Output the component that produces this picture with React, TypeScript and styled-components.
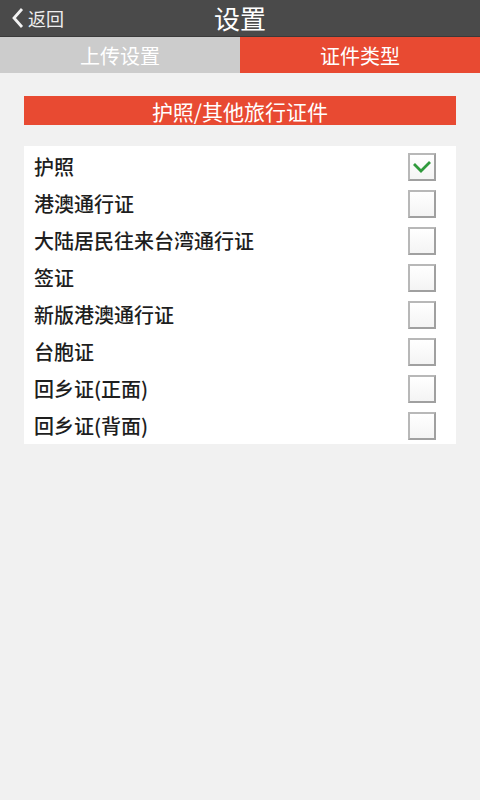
import React, { useState } from "react";
import styled, { createGlobalStyle } from "styled-components";

const GlobalStyle = createGlobalStyle`
  html, body {
    margin: 0;
    padding: 0;
    background: #f1f1f1;
  }
  body {
    font-family: "Noto Sans CJK SC", "Liberation Sans", sans-serif;
  }
`;

const Page = styled.div`
  width: 480px;
  min-height: 800px;
  background: #f1f1f1;
`;

const Header = styled.div`
  position: relative;
  height: 36px;
  background: #4a4a4a;
  display: flex;
  align-items: center;
  justify-content: center;
  border-bottom: 1px solid #3a3a3a;
`;

const Title = styled.h1`
  margin: 0;
  color: #ffffff;
  font-size: 26px;
  font-weight: 400;
  line-height: 36px;
`;

const BackButton = styled.button`
  position: absolute;
  left: 11px;
  top: 0;
  height: 36px;
  display: flex;
  align-items: center;
  gap: 3px;
  padding: 0;
  border: none;
  background: none;
  color: #eeeeee;
  font-family: inherit;
  font-size: 18px;
`;

const Tabs = styled.div`
  display: grid;
  grid-template-columns: 1fr 1fr;
  height: 36px;
`;

const Tab = styled.div<{ $active?: boolean }>`
  display: flex;
  align-items: center;
  justify-content: center;
  background: ${(p) => (p.$active ? "#e84a32" : "#cccccc")};
  color: #ffffff;
  font-size: 20px;
  font-weight: 400;
`;

const Content = styled.div`
  padding: 23px 24px 0;
`;

const SectionBar = styled.div`
  height: 29px;
  background: #e84a32;
  color: #ffffff;
  font-size: 21px;
  font-weight: 400;
  display: flex;
  align-items: center;
  justify-content: center;
  margin-bottom: 21px;
`;

const List = styled.div`
  background: #ffffff;
  padding: 2px 0 0;
`;

const Row = styled.label`
  height: 37px;
  display: flex;
  align-items: center;
  justify-content: space-between;
  padding: 0 20px 0 10px;
  color: #1e1e1e;
  font-size: 20px;
  font-weight: 500;
  cursor: pointer;
`;

const Box = styled.span`
  width: 24px;
  height: 24px;
  border: 2px solid #a0a0a0;
  border-top-color: #b8b8b8;
  border-left-color: #b8b8b8;
  background: linear-gradient(#ffffff, #f4f4f4);
  display: flex;
  align-items: center;
  justify-content: center;
`;

const items = [
  "护照",
  "港澳通行证",
  "大陆居民往来台湾通行证",
  "签证",
  "新版港澳通行证",
  "台胞证",
  "回乡证(正面)",
  "回乡证(背面)",
];

export default function App() {
  const [checked, setChecked] = useState<boolean[]>(items.map((_, i) => i === 0));

  const toggle = (i: number) =>
    setChecked((prev) => prev.map((c, j) => (j === i ? !c : c)));

  return (
    <Page>
      <GlobalStyle />
      <Header>
        <BackButton>
          <svg width="14" height="22" viewBox="0 0 14 22">
            <path d="M11 2 L3 11 L11 20" fill="none" stroke="#f2f2f2" strokeWidth="2.8" />
          </svg>
          返回
        </BackButton>
        <Title>设置</Title>
      </Header>
      <Tabs>
        <Tab>上传设置</Tab>
        <Tab $active>证件类型</Tab>
      </Tabs>
      <Content>
        <SectionBar>护照/其他旅行证件</SectionBar>
        <List>
          {items.map((name, i) => (
            <Row key={name} onClick={() => toggle(i)}>
              {name}
              <Box>
                {checked[i] && (
                  <svg width="20" height="15" viewBox="0 0 20 15">
                    <path d="M2 5 L9 12 L18 3" fill="none" stroke="#2f9a3c" strokeWidth="2.8" />
                  </svg>
                )}
              </Box>
            </Row>
          ))}
        </List>
      </Content>
    </Page>
  );
}
